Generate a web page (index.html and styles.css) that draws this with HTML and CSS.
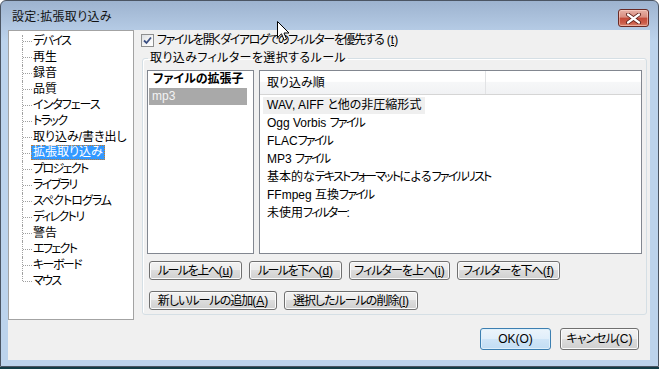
FILE: index.html
```html
<!DOCTYPE html>
<html lang="ja">
<head>
  <meta charset="UTF-8" />
  <title>設定:拡張取り込み</title>
  <link rel="stylesheet" href="styles.css">
</head>
<body>
  <div class="window">
    <div class="titlebar">
      <span class="title">設定:拡張取り込み</span>
      <span class="close">
        <svg width="17" height="11" viewBox="0 0 17 11">
          <path d="M3 1.5 L14 9.5 M14 1.5 L3 9.5" stroke="#5a1c16" stroke-width="4" stroke-linecap="round" fill="none"/>
          <path d="M3 1.5 L14 9.5 M14 1.5 L3 9.5" stroke="#fff" stroke-width="2.2" stroke-linecap="round" fill="none"/>
        </svg>
      </span>
    </div>

    <div class="client">
      <div class="main">
        <ul class="tree">
          <li class="k">デバイス</li>
          <li>再生</li>
          <li>録音</li>
          <li>品質</li>
          <li class="k1">インタフェース</li>
          <li class="k">トラック</li>
          <li>取り込み/書き出し</li>
          <li><span class="sel">拡張取り込み</span></li>
          <li class="k">プロジェクト</li>
          <li class="k">ライブラリ</li>
          <li class="k1">スペクトログラム</li>
          <li class="k">ディレクトリ</li>
          <li>警告</li>
          <li class="k">エフェクト</li>
          <li class="k">キーボード</li>
          <li class="k">マウス</li>
        </ul>

        <div class="panel">
          <label class="check">
            <span class="box">
              <svg width="11" height="11" viewBox="0 0 11 11">
                <path d="M2 5.5 L4.5 8 L9 2.5" stroke="#3b4f82" stroke-width="1.8" fill="none"/>
              </svg>
            </span>
            <span><span class="k">ファイルを開くダイアログでのフィルターを優先する</span> (<u>t</u>)</span>
          </label>

          <fieldset class="group">
            <legend>取り込みフィルターを選択するルール</legend>
            <div class="lists">
              <div class="extlist">
                <div class="exthead">ファイルの拡張子</div>
                <div class="extrow">mp3</div>
              </div>
              <div class="filterlist">
                <div class="fhead">
                  <div class="fcol">取り込み順</div>
                  <div class="fcol2"></div>
                </div>
                <div class="frow"><span class="hl">WAV, AIFF と他の非圧縮形式</span></div>
                <div class="frow"><span class="txt">Ogg Vorbis <span class="k">ファイル</span></span></div>
                <div class="frow"><span class="txt">FLAC<span class="k">ファイル</span></span></div>
                <div class="frow"><span class="txt">MP3 <span class="k">ファイル</span></span></div>
                <div class="frow"><span class="txt">基本的な<span class="k">テキストフォーマット</span>による<span class="k">ファイルリスト</span></span></div>
                <div class="frow"><span class="txt">FFmpeg 互換<span class="k">ファイル</span></span></div>
                <div class="frow"><span class="txt">未使用<span class="k">フィルター</span>:</span></div>
              </div>
            </div>
            <div class="btnrow first">
              <button class="btn w93"><span class="k2">ルールを上へ</span>(<u>u</u>)</button>
              <button class="btn w93"><span class="k2">ルールを下へ</span>(<u>d</u>)</button>
              <button class="btn w101"><span class="k">フィルターを上へ</span>(<u>i</u>)</button>
              <button class="btn w103"><span class="k">フィルターを下へ</span>(<u>f</u>)</button>
            </div>
            <div class="btnrow second">
              <button class="btn w128"><span class="k">新しいルールの追加</span>(<u>A</u>)</button>
              <button class="btn w134"><span class="k">選択したルールの削除</span>(<u>l</u>)</button>
            </div>
          </fieldset>
        </div>
      </div>

      <div class="footer">
        <button class="btn ok">OK(O)</button>
        <button class="btn cancel"><span class="k">キャンセル</span>(C)</button>
      </div>
    </div>

    <svg class="cursor" width="13" height="21" viewBox="0 0 13 21">
      <path d="M0.5 0.5 L0.5 16.5 L4.5 12.8 L7.2 19.2 L9.6 18.2 L7 12 L12 12 Z" fill="#fff" stroke="#000" stroke-width="1"/>
    </svg>
  </div>
</body>
</html>
```

FILE: styles.css
```css
html, body {
  margin: 0;
  padding: 0;
}
body {
  width: 659px;
  height: 369px;
  overflow: hidden;
  background: linear-gradient(to bottom, #fff 367px, #123c46 367px);
  font-family: "Liberation Sans", "Noto Sans CJK JP", sans-serif;
  font-size: 12px;
  font-feature-settings: "palt";
  color: #000;
}
button {
  font-family: inherit;
  font-size: 12px;
  font-feature-settings: "palt";
  color: #000;
}
u {
  text-underline-offset: 1px;
}

.window {
  position: relative;
  box-sizing: border-box;
  width: 659px;
  height: 367px;
  border: 1px solid #4b5563;
  border-radius: 6px 6px 0 0;
  background: linear-gradient(to bottom, #9db3cf 0, #b4cae4 28px, #bcd3ec 40px, #bcd3ec 100%);
  padding: 0 8px 6px 7px;
}

/* title bar */
.titlebar {
  height: 29px;
  display: flex;
  justify-content: space-between;
  align-items: flex-start;
}
.title {
  padding: 9px 0 0 4px;
  line-height: 14px;
  letter-spacing: 0.3px;
  color: #111;
}
.close {
  box-sizing: border-box;
  width: 31px;
  height: 18px;
  margin-top: 8px;
  margin-right: 1px;
  border: 1px solid #6a2a24;
  border-radius: 3px;
  background: linear-gradient(to bottom, #e7b1a6 0, #d98d80 45%, #c44a39 50%, #cb5c49 80%, #d98570 100%);
  box-shadow: inset 0 0 0 1px rgba(255, 220, 210, 0.5);
  display: flex;
  align-items: center;
  justify-content: center;
}

/* client area */
.client {
  height: 330px;
  background: #f0f0f0;
}
.main {
  display: flex;
  height: 290px;
}

/* tree */
.tree {
  box-sizing: border-box;
  width: 126px;
  height: 290px;
  margin: 0;
  padding: 2px 0 0 0;
  list-style: none;
  background: #fff;
  border: 1px solid #a3a3a3;
}
.tree li {
  position: relative;
  height: 16px;
  line-height: 16px;
  padding-left: 24px;
  white-space: nowrap;
}
.tree li.k {
  letter-spacing: -1.6px;
}
.tree li.k1 {
  letter-spacing: -1px;
}
.tree li::before {
  content: "";
  position: absolute;
  left: 13px;
  top: 0;
  bottom: 0;
  border-left: 1px dotted #a0a0a0;
}
.tree li:first-child::before {
  top: 2px;
}
.tree li:last-child::before {
  bottom: 8px;
}
.tree li::after {
  content: "";
  position: absolute;
  left: 14px;
  top: 8px;
  width: 9px;
  border-top: 1px dotted #a0a0a0;
}
.tree .sel {
  display: inline-block;
  margin-left: -2px;
  padding: 0 1px;
  height: 13px;
  line-height: 13px;
  background: #3399ff;
  color: #fff;
  border: 1px dotted #c77b2a;
  vertical-align: top;
}

/* right panel */
.panel {
  width: 509px;
  margin-left: 7px;
}
.check {
  display: flex;
  align-items: center;
  gap: 3px;
  height: 16px;
  margin-top: 2px;
  line-height: 16px;
  white-space: nowrap;
}
.check .k {
  letter-spacing: -1.4px;
}
.check .box {
  box-sizing: border-box;
  width: 13px;
  height: 13px;
  border: 1px solid #8e8f8f;
  background: linear-gradient(135deg, #dcdfe3 0, #f6f6f6 60%, #fff 100%);
  display: flex;
  align-items: center;
  justify-content: center;
}

.group {
  box-sizing: border-box;
  width: 505px;
  margin: 2px 0 0 1px;
  padding: 4px 4px 4px 4px;
  border: 1px solid #d5dfe5;
  border-radius: 3px;
  box-shadow: inset 1px 1px 0 #fff;
}
.group legend {
  margin-left: 1px;
  padding: 0 2px;
  line-height: 16px;
  letter-spacing: 0.4px;
  white-space: nowrap;
}

.lists {
  display: flex;
  gap: 5px;
  height: 184px;
}
.extlist {
  box-sizing: border-box;
  width: 107px;
  border: 1px solid #828790;
  background: #fff;
  padding-left: 1px;
}
.exthead {
  width: 98px;
  height: 17px;
  line-height: 17px;
  padding-left: 4px;
  box-sizing: border-box;
  font-weight: bold;
  white-space: nowrap;
}
.extrow {
  width: 98px;
  height: 17px;
  line-height: 17px;
  padding-left: 3px;
  box-sizing: border-box;
  background: #a9a9a9;
  color: #f4f4f4;
}

.filterlist {
  box-sizing: border-box;
  flex: 1;
  border: 1px solid #828790;
  background: #fff;
}
.fhead {
  display: flex;
  height: 23px;
  border-bottom: 1px solid #d5d5d5;
  background: linear-gradient(to bottom, #fff 0, #fff 45%, #f6f7f8 50%, #f1f2f4 100%);
}
.fcol {
  width: 226px;
  padding: 2px 0 0 7px;
  box-sizing: border-box;
  line-height: 21px;
  border-right: 1px solid #e2e3e5;
}
.fcol2 {
  flex: 1;
}
.frow {
  height: 18px;
  padding-left: 3px;
  white-space: nowrap;
}
.frow .hl,
.frow .txt {
  display: inline-block;
  padding: 0 4px;
  margin-top: 2px;
  line-height: 17px;
}
.frow .hl {
  background: #efefef;
}
.frow .k {
  letter-spacing: -1.8px;
}

/* buttons */
.btnrow {
  display: flex;
  gap: 7px;
  padding-left: 2px;
}
.btnrow.first {
  margin-top: 7px;
}
.btnrow.second {
  margin-top: 11px;
}
.btn {
  box-sizing: border-box;
  height: 19px;
  padding: 0;
  line-height: 16px;
  border: 1px solid #707070;
  border-radius: 3px;
  background: linear-gradient(to bottom, #f2f2f2 0, #ebebeb 50%, #dddddd 50%, #cfcfcf 100%);
  box-shadow: inset 0 0 0 1px #fbfbfb;
  white-space: nowrap;
}
.btn .k {
  letter-spacing: -1px;
}
.btn .k2 {
  letter-spacing: -1.5px;
}
.w93 { width: 93px; }
.w101 { width: 101px; }
.w103 { width: 103px; }
.w128 { width: 128px; }
.w134 { width: 134px; }

.footer {
  display: flex;
  justify-content: flex-end;
  gap: 9px;
  margin-top: 8px;
  padding-right: 11px;
}
.footer .btn {
  height: 22px;
}
.footer .ok {
  width: 71px;
  border-color: #3c7fb1;
  background: linear-gradient(to bottom, #ebf4fb 0, #e0eefa 50%, #cfe5f7 50%, #c2ddf3 100%);
  box-shadow: inset 0 0 0 1px #dff0fb;
}
.footer .cancel {
  width: 79px;
}

.cursor {
  position: absolute;
  left: 276px;
  top: 20px;
}
```
